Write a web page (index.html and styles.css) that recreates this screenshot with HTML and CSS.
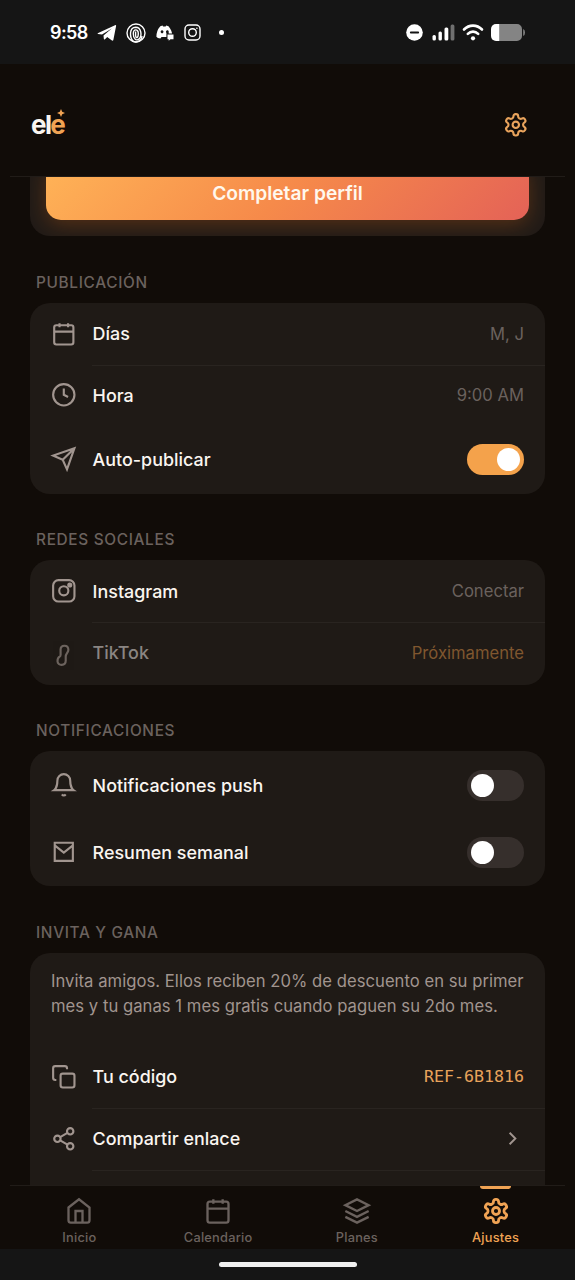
FILE: index.html
```html
<!DOCTYPE html>
<html lang="es">
<head>
<meta charset="utf-8">
<title>ele – Ajustes</title>
<link rel="stylesheet" href="styles.css">
</head>
<body>
<svg class="defs" width="0" height="0">
  <symbol id="gear" viewBox="0 0 24 24">
    <path d="M12.22 2h-.44a2 2 0 0 0-2 2v.18a2 2 0 0 1-1 1.73l-.43.25a2 2 0 0 1-2 0l-.15-.08a2 2 0 0 0-2.73.73l-.22.38a2 2 0 0 0 .73 2.73l.15.1a2 2 0 0 1 1 1.72v.51a2 2 0 0 1-1 1.74l-.15.09a2 2 0 0 0-.73 2.73l.22.38a2 2 0 0 0 2.73.73l.15-.08a2 2 0 0 1 2 0l.43.25a2 2 0 0 1 1 1.73V20a2 2 0 0 0 2 2h.44a2 2 0 0 0 2-2v-.18a2 2 0 0 1 1-1.73l.43-.25a2 2 0 0 1 2 0l.15.08a2 2 0 0 0 2.73-.73l.22-.39a2 2 0 0 0-.73-2.73l-.15-.08a2 2 0 0 1-1-1.74v-.5a2 2 0 0 1 1-1.74l.15-.09a2 2 0 0 0 .73-2.73l-.22-.38a2 2 0 0 0-2.73-.73l-.15.08a2 2 0 0 1-2 0l-.43-.25a2 2 0 0 1-1-1.73V4a2 2 0 0 0-2-2z"/>
    <circle cx="12" cy="12" r="3"/>
  </symbol>
  <symbol id="calendar" viewBox="0 0 24 24">
    <rect x="3" y="4" width="18" height="18" rx="2"/>
    <path d="M16 2v3.8M8 2v3.8M3 10h18"/>
  </symbol>
</svg>

<header class="status">
  <div class="status-left">
    <span class="time">9:58</span>
    <svg class="st-telegram" width="20" height="18" viewBox="0 0 20 18"><path fill="#fff" d="M.7 9.2 18 1.2Q19.3.7 19.1 2.1L16.4 15.7Q16 17.3 14.6 16.3L10.2 13.1 8 15.3Q7 16.2 6.8 14.6L6.5 11.5 14.8 4.4 5 10.6 1 9.9Q.2 9.5.7 9.2z"/></svg>
    <svg class="st-threads" width="20" height="20" viewBox="0 0 20 20" fill="none" stroke="#fff" stroke-width="1.4"><circle cx="10" cy="10" r="9"/><path d="M7.600 18.700C3.300 14.500 3 4.500 9.700 4.300c5.800 0 6.400 8.500 3.600 11.600-2.800 2.400-6 .1-6-5.100 0-5.200 5-5 5-.4 0 4.800-2.700 5.800-2.700 1.400V8.500"/><path d="M7.600 18.700C12 20 15.500 17.500 16 13"/></svg>
    <svg class="st-discord" width="18" height="16" viewBox="0 0 18 16"><path fill="#fff" fill-rule="evenodd" d="M4.300 1.200 6.500.5 7.100 1.600h2.500L10.200.5l2.300.7C15 4.300 16 7 16 8.500h-3.300V7.200a1.400 1.600 0 1 0-2.300.8v4H5.500l-1.100 1.500Q1.500 13.200.4 11.700.4 5.500 4.300 1.200zM6 5.200a1.400 1.600 0 1 0 .1 0z"/><path fill="#fff" d="M11.500 9.500h6v4.700h-3l-1.800 1.600v-1.600h-1.200z"/></svg>
    <svg class="st-insta" width="17" height="17" viewBox="0 0 17 17" fill="none" stroke="#fff" stroke-width="1.400"><rect x="1" y="1" width="15" height="15" rx="4"/><circle cx="8.500" cy="8.500" r="3.800"/><circle cx="12.900" cy="4.200" r=".8" fill="#fff" stroke="none"/></svg>
    <i class="st-dot"></i>
  </div>
  <div class="status-right">
    <svg width="17" height="17" viewBox="0 0 17 17"><circle cx="8.500" cy="8.500" r="8.300" fill="#fff"/><path d="M4.800 8.500h7.400" stroke="#151515" stroke-width="1.800" stroke-linecap="round"/></svg>
    <svg class="st-signal" width="23" height="17" viewBox="0 0 23 17" fill="#fff"><rect x=".5" y="11" width="3.400" height="5.500" rx="1.500"/><rect x="6.500" y="7.500" width="3.400" height="9" rx="1.500"/><rect x="12.500" y="3.500" width="3.800" height="13" rx="1.500"/><rect x="18.600" y=".5" width="3.800" height="16" rx="1.500" fill="#707070"/></svg>
    <svg class="st-wifi" width="22" height="17" viewBox="0 0 22 17" fill="none" stroke="#fff" stroke-width="2.600" stroke-linecap="round"><path d="M2 5.500C7 .3 15 .3 20 5.500M5.800 9.900c3-3 7.400-3 10.400 0"/><circle cx="11" cy="14.300" r="2.100" fill="#fff" stroke="none"/></svg>
    <svg class="st-battery" width="35" height="17" viewBox="0 0 35 17"><path fill="#848484" d="M7 0h19a5 5 0 0 1 5 5v7a5 5 0 0 1-5 5H7zM32.200 5Q34 5.500 34 8.500T32.200 12z"/><path fill="#fff" d="M5 0h3.200v17H5a5 5 0 0 1-5-5V5a5 5 0 0 1 5-5z"/></svg>
  </div>
</header>

<div class="app">
  <div class="topbar">
    <div class="logo"><span>el</span><span class="logo-accent">e<svg class="spark" width="8" height="8" viewBox="0 0 8 8"><path fill="currentColor" d="M4 0 5.200 2.800 8 4 5.200 5.200 4 8 2.800 5.200 0 4 2.800 2.800z"/></svg></span></div>
    <svg class="icon icon-top"><use href="#gear"/></svg>
  </div>

  <main class="content">
    <div class="card promo"><div class="cta">Completar perfil</div></div>

    <h2 class="label">Publicación</h2>
    <section class="card schedule">
      <div class="row divided"><svg class="icon"><use href="#calendar"/></svg><span class="name">Días</span><span class="value">M, J</span></div>
      <div class="row short"><svg class="icon" viewBox="0 0 24 24"><circle cx="12" cy="12" r="10"/><path d="M12 6v6l4 2"/></svg><span class="name">Hora</span><span class="value">9:00 AM</span></div>
      <div class="row tall"><svg class="icon" viewBox="0 0 24 24"><path d="M22 2 11 13M22 2l-7 20-4-9-9-4 20-7z"/></svg><span class="name">Auto-publicar</span><span class="toggle on"></span></div>
    </section>

    <h2 class="label">Redes sociales</h2>
    <section class="card social">
      <div class="row divided"><svg class="icon" viewBox="0 0 24 24"><rect x="2" y="2" width="20" height="20" rx="5"/><circle cx="12" cy="12" r="4.300"/><circle class="fill" cx="17.600" cy="6.600" r="2.400"/></svg><span class="name">Instagram</span><span class="value">Conectar</span></div>
      <div class="row short"><svg class="icon dim" viewBox="0 0 24 24"><path d="M9 8.800C9.200 4.200 16.200 4.200 16.300 9.200c0 2.800-2.500 3.600-2.500 6.300v4c0 4.900-7.600 5-7.700.5 0-2.800.6-3.800 1.900-4.300.9-.4 1-1 1-1.900z"/></svg><span class="name dim">TikTok</span><span class="value soon">Próximamente</span></div>
    </section>

    <h2 class="label">Notificaciones</h2>
    <section class="card alerts">
      <div class="row tall"><svg class="icon" viewBox="0 0 24 24"><path d="M18 8A6 6 0 0 0 6 8c0 7-3 9-3 9h18s-3-2-3-9M13.730 21a2 2 0 0 1-3.460 0"/></svg><span class="name">Notificaciones push</span><span class="toggle"></span></div>
      <div class="row tall"><svg class="icon" viewBox="0 0 24 24"><path d="M3.500 3.500h17v17h-17zM3.500 6l8.500 6.700L20.500 6"/></svg><span class="name">Resumen semanal</span><span class="toggle"></span></div>
    </section>

    <h2 class="label">Invita y gana</h2>
    <section class="card">
      <p class="blurb">Invita amigos. Ellos reciben 20% de descuento en su primer<br>mes y tu ganas 1 mes gratis cuando paguen su 2do mes.</p>
      <div class="row divided"><svg class="icon" viewBox="0 0 24 24"><rect x="9" y="9" width="13" height="13" rx="2"/><path d="M5 15H4a2 2 0 0 1-2-2V4a2 2 0 0 1 2-2h9a2 2 0 0 1 2 2v1"/></svg><span class="name">Tu código</span><span class="value code">REF-6B1816</span></div>
      <div class="row divided"><svg class="icon" viewBox="0 0 24 24"><circle cx="18" cy="5" r="3"/><circle cx="6" cy="12" r="3"/><circle cx="18" cy="19" r="3"/><path d="m8.590 13.510 6.830 3.980M15.410 6.510l-6.820 3.980"/></svg><span class="name">Compartir enlace</span><svg class="icon chevron" viewBox="0 0 24 24"><path d="m9 18 6-6-6-6"/></svg></div>
      <div class="row"></div>
    </section>
  </main>

  <nav class="tabs">
    <div class="tab"><svg class="icon" viewBox="0 0 24 24"><path d="m3 9 9-7 9 7v11a2 2 0 0 1-2 2H5a2 2 0 0 1-2-2zM9 22V12h6v10"/></svg><span>Inicio</span></div>
    <div class="tab"><svg class="icon"><use href="#calendar"/></svg><span>Calendario</span></div>
    <div class="tab"><svg class="icon" viewBox="0 0 24 24"><path d="M12 2 2 7l10 5 10-5zM2 17l10 5 10-5M2 12l10 5 10-5"/></svg><span>Planes</span></div>
    <div class="tab active"><svg class="icon"><use href="#gear"/></svg><span>Ajustes</span></div>
  </nav>
</div>
<footer class="gesture"><i></i></footer>
</body>
</html>
```
FILE: styles.css
```css
* { box-sizing: border-box; }

body {
  margin: 0;
  width: 575px;
  height: 1280px;
  overflow: hidden;
  display: flex;
  flex-direction: column;
  background: #110c08;
  color: #faf5f0;
  font-family: Inter, "Liberation Sans", sans-serif;
}

.defs { position: absolute; }

/* System status bar */
.status {
  height: 64px;
  flex: none;
  display: flex;
  justify-content: space-between;
  align-items: center;
  padding: 1px 49px 0 50px;
  background: #151515;
}
.status-left, .status-right { display: flex; align-items: center; }
.time { width: 47px; font-size: 18px; font-weight: 600; letter-spacing: -0.6px; color: #fff; }
.st-threads { margin-left: 9px; }
.st-discord { margin-left: 10px; }
.st-insta { margin-left: 10px; }
.st-dot { width: 5px; height: 5px; margin-left: 18px; border-radius: 50%; background: #fff; }
.st-signal { margin-left: 9px; }
.st-wifi { margin-left: 7px; }
.st-battery { margin-left: 7px; }

/* App frame */
.app { flex: none; height: 1185px; padding: 0 10px; display: flex; flex-direction: column; }

.topbar {
  height: 113px;
  flex: none;
  display: flex;
  justify-content: space-between;
  align-items: center;
  padding: 10px 36px 0 21px;
  border-bottom: 1px solid #211c18;
}
.logo { display: flex; font-size: 26px; font-weight: 700; letter-spacing: -1.6px; line-height: 30px; }
.logo-accent { position: relative; color: #f0a354; }
.spark { position: absolute; left: 7px; top: -1px; }

.icon {
  width: 25.6px;
  height: 25.6px;
  flex: none;
  fill: none;
  stroke: #a1958f;
  stroke-width: 2;
  overflow: visible;
}
.icon .fill { fill: #a1958f; stroke: none; }
.icon-top { stroke: #e8a35c; }

.content { flex: none; height: 1008px; overflow: hidden; padding: 0 20px; }

.card { border-radius: 20px; background: #1f1a16; overflow: hidden; }
.schedule { height: 191px; }
.social { height: 124.5px; }
.alerts { height: 135px; padding-top: 0.5px; }

.promo { height: 59px; padding: 0 16px; border-radius: 0 0 20px 20px; background: #211b17; }
.cta {
  height: 59px;
  margin-top: -16px;
  border-radius: 15px;
  background: linear-gradient(135deg, #ffb457 0%, #f68a4a 50%, #e46257 100%);
  box-shadow: 0 5px 20px rgba(249, 115, 22, 0.24);
  color: #fff8ee;
  font-size: 19.2px;
  font-weight: 600;
  line-height: 64px;
  text-align: center;
}

.label {
  margin: 36.5px 6px 10px;
  height: 20px;
  line-height: 20px;
  font-size: 15.36px;
  font-weight: 500;
  letter-spacing: 0.68px;
  text-transform: uppercase;
  color: #6b625e;
}

.row {
  height: 62px;
  display: flex;
  align-items: center;
  padding: 0 21px;
  position: relative;
}
.row.short { height: 61px; }
.row.tall { height: 67px; }
.row.divided::after {
  content: "";
  position: absolute;
  left: 62px;
  right: 0;
  bottom: -1px;
  height: 1px;
  background: #292420;
}
.name { margin-left: 16px; font-size: 17.92px; font-weight: 500; }
.value { margin-left: auto; font-size: 16.64px; color: #6b625e; }
.icon.dim { opacity: 0.6; }
.name.dim { color: #8a8582; }
.soon { color: #80572f; }
.code { font-family: "DejaVu Sans Mono", monospace; color: #e8a35c; }
.chevron { width: 23px; height: 23px; margin-left: auto; }

.toggle { width: 57px; height: 31px; margin-left: auto; padding: 4px; display: flex; border-radius: 16px; background: #362f2c; }
.toggle::before { content: ""; width: 23px; height: 23px; border-radius: 50%; background: #fff; }
.toggle.on { justify-content: flex-end; background: #f4a24b; }

.blurb { margin: 0; height: 93px; padding: 16.5px 0 0 21px; font-size: 16.64px; letter-spacing: 0.035px; line-height: 25px; white-space: nowrap; color: #a1958f; }

/* Bottom tab bar */
.tabs { height: 64px; flex: none; display: flex; border-top: 1px solid #211c18; }
.tab {
  flex: 1;
  display: flex;
  flex-direction: column;
  align-items: center;
  padding-top: 11px;
  font-size: 12.8px;
  font-weight: 500;
  line-height: 16px;
  letter-spacing: 0.24px;
  color: #6b625e;
  position: relative;
}
.tab .icon { width: 28px; height: 28px; margin-bottom: 5px; stroke: #6b625e; }
.tab.active { color: #f0a354; }
.tab.active .icon { stroke: #f0a354; stroke-width: 2.4; }
.tab.active::before {
  content: "";
  position: absolute;
  top: 0;
  width: 31px;
  height: 3px;
  border-radius: 0 0 3px 3px;
  background: #f0a354;
}

.gesture { height: 31px; flex: none; display: flex; justify-content: center; align-items: center; background: #151515; }
.gesture i { width: 138px; height: 5px; border-radius: 3px; background: #f0f0f0; }
```
